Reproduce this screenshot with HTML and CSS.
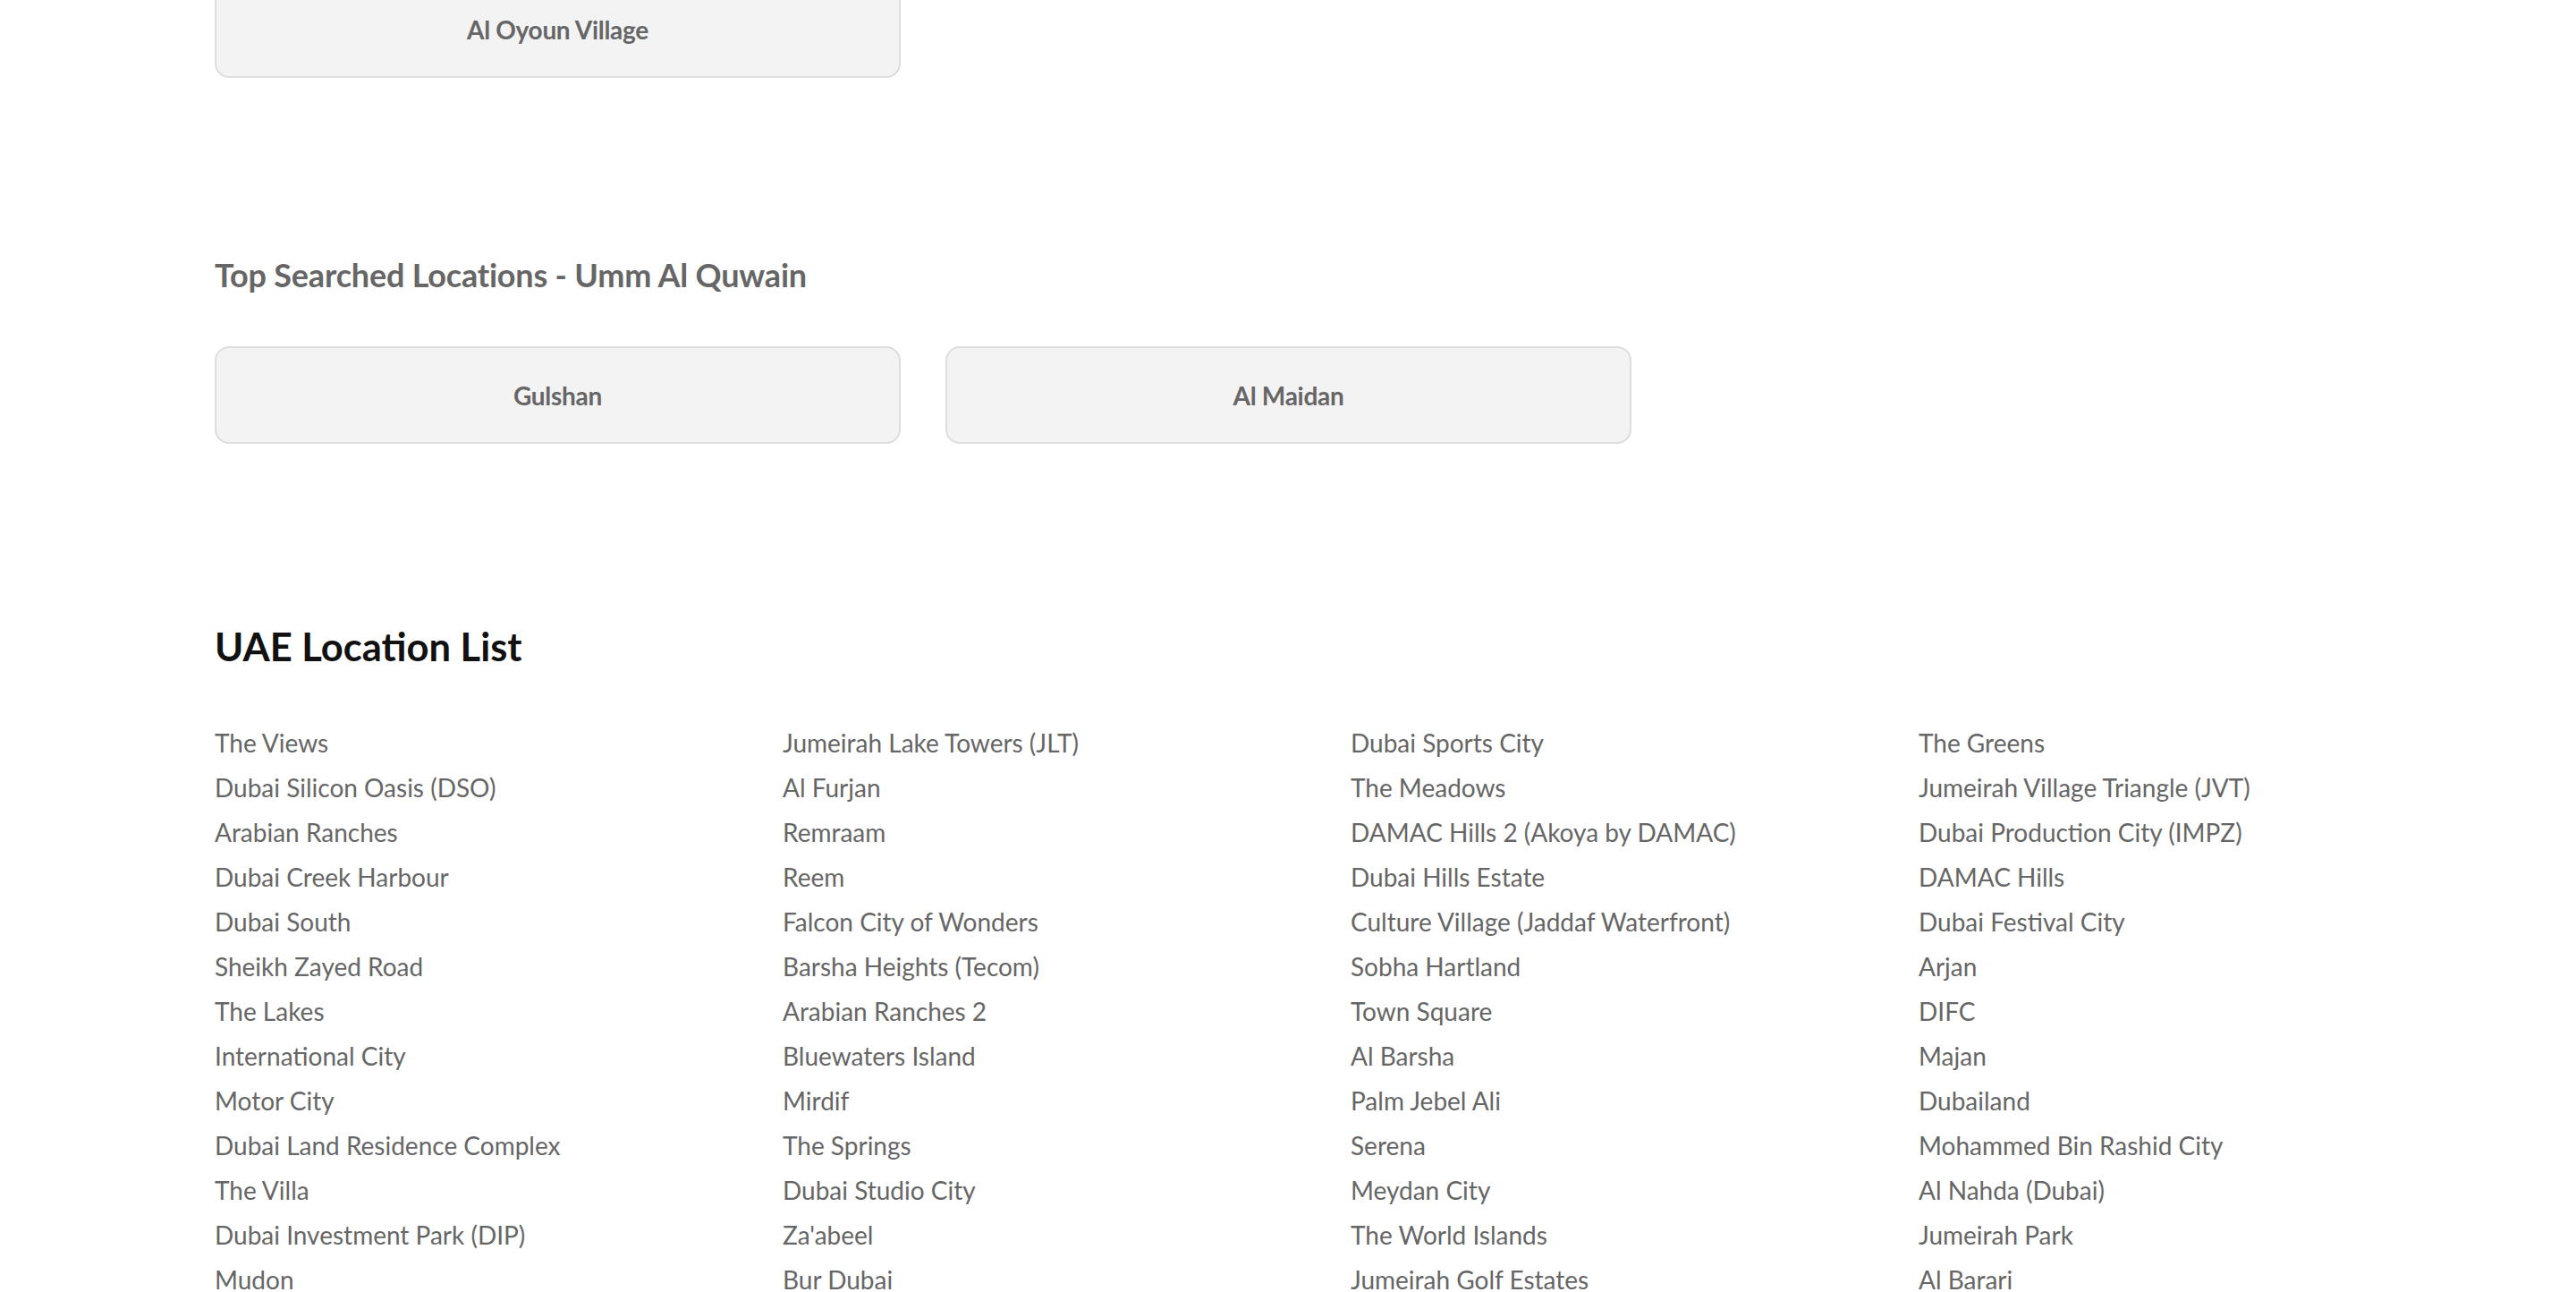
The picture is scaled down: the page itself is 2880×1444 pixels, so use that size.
FILE: index.html
```html
<!DOCTYPE html>
<html lang="en">
<head>
<meta charset="utf-8">
<title>UAE Locations</title>
<link rel="stylesheet" href="styles.css">
</head>
<body>
<main class="page">
  <section class="top-section first">
    <div class="card-row">
      <a class="loc-card" href="#">Al Oyoun Village</a>
    </div>
  </section>

  <section class="top-section">
    <h2 class="section-title">Top Searched Locations - Umm Al Quwain</h2>
    <div class="card-row">
      <a class="loc-card" href="#">Gulshan</a>
      <a class="loc-card" href="#">Al Maidan</a>
    </div>
  </section>

  <section class="list-section">
    <h2 class="list-title">UAE Location List</h2>
    <ul class="loc-list">
      <li>The Views</li><li>Jumeirah Lake Towers (JLT)</li><li>Dubai Sports City</li><li>The Greens</li>
      <li>Dubai Silicon Oasis (DSO)</li><li>Al Furjan</li><li>The Meadows</li><li>Jumeirah Village Triangle (JVT)</li>
      <li>Arabian Ranches</li><li>Remraam</li><li>DAMAC Hills 2 (Akoya by DAMAC)</li><li>Dubai Production City (IMPZ)</li>
      <li>Dubai Creek Harbour</li><li>Reem</li><li>Dubai Hills Estate</li><li>DAMAC Hills</li>
      <li>Dubai South</li><li>Falcon City of Wonders</li><li>Culture Village (Jaddaf Waterfront)</li><li>Dubai Festival City</li>
      <li>Sheikh Zayed Road</li><li>Barsha Heights (Tecom)</li><li>Sobha Hartland</li><li>Arjan</li>
      <li>The Lakes</li><li>Arabian Ranches 2</li><li>Town Square</li><li>DIFC</li>
      <li>International City</li><li>Bluewaters Island</li><li>Al Barsha</li><li>Majan</li>
      <li>Motor City</li><li>Mirdif</li><li>Palm Jebel Ali</li><li>Dubailand</li>
      <li>Dubai Land Residence Complex</li><li>The Springs</li><li>Serena</li><li>Mohammed Bin Rashid City</li>
      <li>The Villa</li><li>Dubai Studio City</li><li>Meydan City</li><li>Al Nahda (Dubai)</li>
      <li>Dubai Investment Park (DIP)</li><li>Za'abeel</li><li>The World Islands</li><li>Jumeirah Park</li>
      <li>Mudon</li><li>Bur Dubai</li><li>Jumeirah Golf Estates</li><li>Al Barari</li>
    </ul>
  </section>
</main>
</body>
</html>
```

FILE: styles.css
```css
html, body {
  margin: 0;
  padding: 0;
  background: #ffffff;
}

body {
  font-family: Lato, "Open Sans", "Liberation Sans", sans-serif;
  color: #666666;
  overflow: hidden;
}

.page {
  padding: 0 0 0 240px;
}

.top-section {
  display: flex;
  flex-direction: column;
}

.top-section.first {
  margin-top: -22px;
  margin-bottom: 199px;
}

.section-title {
  margin: 0 0 58px 0;
  font-size: 36px;
  line-height: 1.2;
  font-weight: 700;
  letter-spacing: -0.2px;
  color: #666666;
}

.card-row {
  display: flex;
  gap: 50px;
}

.loc-card {
  box-sizing: border-box;
  width: 767px;
  height: 109px;
  display: flex;
  align-items: center;
  justify-content: center;
  background: #f3f3f3;
  border: 2px solid #dddddd;
  border-radius: 16px;
  font-size: 28px;
  font-weight: 700;
  letter-spacing: -0.3px;
  color: #666666;
  text-decoration: none;
}

.list-section {
  margin-top: 200px;
}

.list-title {
  margin: 0 0 57px 0;
  font-size: 43.5px;
  line-height: 1.2;
  font-weight: 700;
  color: #111111;
}

.loc-list {
  list-style: none;
  margin: 0;
  padding: 0;
  display: grid;
  grid-template-columns: repeat(4, 635px);
  grid-auto-rows: 50px;
}

.loc-list li {
  font-size: 28px;
  line-height: 50px;
  color: #666666;
  white-space: nowrap;
}
```
